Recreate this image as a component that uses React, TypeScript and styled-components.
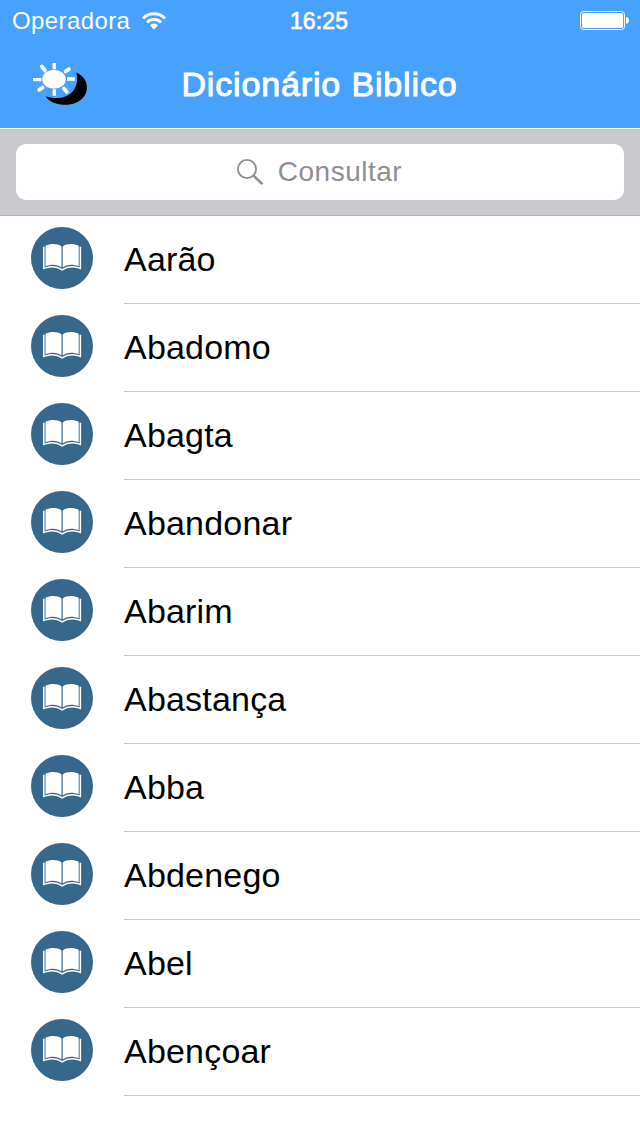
import React from "react";
import styled, { createGlobalStyle } from "styled-components";

const GlobalStyle = createGlobalStyle`
  * { box-sizing: border-box; }
  body {
    margin: 0;
    background: #fff;
    font-family: "Liberation Sans", Arial, sans-serif;
    overflow: hidden;
  }
`;

const Screen = styled.div`
  width: 640px;
  height: 1136px;
  overflow: hidden;
  display: flex;
  flex-direction: column;
  background: #fff;
`;

const Header = styled.header`
  height: 129px;
  flex: none;
  background: #47a1ff;
  border-bottom: 1px solid #f4f4f4;
  color: #fff;
`;

const StatusBar = styled.div`
  height: 40px;
  display: grid;
  grid-template-columns: 1fr auto 1fr;
  align-items: center;
  padding: 1px 11px 0 12px;
`;

const Carrier = styled.div`
  display: flex;
  align-items: center;
  gap: 11px;
  font-size: 24px;
  line-height: 28px;
  letter-spacing: 0.4px;
`;

const Clock = styled.div`
  padding-right: 3px;
  font-size: 23px;
  line-height: 28px;
  letter-spacing: 0.1px;
  -webkit-text-stroke: 0.7px #fff;
`;

const BatterySlot = styled.div`
  display: flex;
  justify-content: flex-end;
`;

const NavBar = styled.div`
  height: 88px;
  display: grid;
  grid-template-columns: 1fr auto 1fr;
  align-items: center;
  padding: 0 33px 0 32px;
`;

const ThemeButton = styled.button`
  width: 56px;
  height: 44px;
  padding: 0;
  border: 0;
  background: none;
  display: flex;
`;

const Title = styled.h1`
  margin: 0;
  font-size: 34px;
  line-height: 40px;
  font-weight: 400;
  letter-spacing: 0.85px;
  -webkit-text-stroke: 1px #fff;
`;

const SearchBar = styled.div`
  height: 87px;
  flex: none;
  padding: 15px 16px;
  background: #c9c9ce;
  border-bottom: 1px solid #b2b2b6;
`;

const SearchField = styled.div`
  height: 56px;
  display: flex;
  align-items: center;
  justify-content: center;
  gap: 14px;
  padding-right: 2px;
  border-radius: 10px;
  background: #fff;
  color: #8e8e93;
  font-size: 28px;
  line-height: 34px;
  letter-spacing: 0.5px;
`;

const List = styled.ul`
  margin: 0;
  padding: 0;
  list-style: none;
`;

const Row = styled.li`
  height: 88px;
  display: flex;
  padding-left: 30px;
`;

const RowIcon = styled.div`
  width: 94px;
  flex: none;
  padding-top: 10px;
`;

const RowLabel = styled.div`
  flex: 1;
  display: flex;
  align-items: center;
  padding-bottom: 2px;
  border-bottom: 1px solid #c8c7cc;
  color: #000;
  font-size: 34px;
  line-height: 40px;
  letter-spacing: 0.2px;
`;

const WifiIcon = () => (
  <svg width="26" height="20" viewBox="0 0 26 20" fill="none">
    <path d="M2 7.4 A15.5 15.5 0 0 1 24 7.4" stroke="#fff" strokeWidth="2.9" />
    <path d="M6 11.4 A9.9 9.9 0 0 1 20 11.4" stroke="#fff" strokeWidth="2.8" />
    <path d="M8.9 14.3 A5.8 5.8 0 0 1 17.1 14.3 L13 18.5 Z" fill="#fff" />
  </svg>
);

const BatteryIcon = () => (
  <svg width="49" height="19" viewBox="0 0 49 19">
    <rect x="0.5" y="0.5" width="44" height="18" rx="3" fill="none" stroke="#fff" />
    <rect x="2" y="2" width="41" height="15" rx="1.6" fill="#fff" />
    <path d="M46 6 C48 6.3 49 7.6 49 9.5 C49 11.4 48 12.7 46 13 Z" fill="#fff" />
  </svg>
);

const DayNightIcon = () => (
  <svg width="56" height="44" viewBox="0 0 56 44">
    <path
      d="M44.3 10.6 C51 13.7 54.9 18.5 54.9 25.5 C54.9 35.5 45.5 42.8 33.5 42.8 C24.5 42.8 17.5 39.8 13.5 34.2 C19 36 25 36.4 30.5 35.4 C41.5 33.2 47.5 22.5 44.3 10.6 Z"
      fill="#000"
    />
    <ellipse cx="22" cy="17.2" rx="11.8" ry="9.5" fill="#fff" />
    <g stroke="#fff" strokeWidth="3.4">
      <path d="M22.3 1 V7.2 M22.3 27.2 V33.8 M1 17.6 H9.4 M35 17 H43" />
      <path d="M9.8 4.6 L12.8 8.4 M33.6 9.4 L37 7.2 M7.3 27.8 L10.5 25.6 M31.9 26.5 L34.8 29.9" strokeWidth="3.8" strokeLinecap="round" />
    </g>
  </svg>
);

const SearchIcon = () => (
  <svg width="28" height="28" viewBox="0 0 28 28" fill="none" stroke="#8e8e93">
    <circle cx="11" cy="11" r="9.1" strokeWidth="1.9" />
    <path d="M17.6 17.6 L25.6 25.4" strokeWidth="2.7" strokeLinecap="round" />
  </svg>
);

const BookIcon = () => (
  <svg width="64" height="64" viewBox="0 0 64 64">
    <circle cx="32" cy="32" r="31" fill="#38678c" />
    <path
      d="M15.5 19.8 C20 17.6 27.5 17.2 31.5 20.6 V41.4 C27.5 38.2 21 38 15.5 40.3 Z M32.7 20.6 C36.7 17.2 44 17.6 48.7 19.8 V40.3 C43.2 38 36.7 38.2 32.7 41.4 Z"
      fill="#fff"
    />
    <path
      d="M13.8 20.8 V42.4 C20.5 40 27 40.4 32.1 43.9 C37.2 40.4 43.7 40 50.4 42.4 V20.8"
      fill="none"
      stroke="#fff"
      strokeWidth="1.5"
    />
  </svg>
);

const entries = [
  "Aarão",
  "Abadomo",
  "Abagta",
  "Abandonar",
  "Abarim",
  "Abastança",
  "Abba",
  "Abdenego",
  "Abel",
  "Abençoar",
];

export default function App() {
  return (
    <Screen>
      <GlobalStyle />
      <Header>
        <StatusBar>
          <Carrier>
            Operadora
            <WifiIcon />
          </Carrier>
          <Clock>16:25</Clock>
          <BatterySlot>
            <BatteryIcon />
          </BatterySlot>
        </StatusBar>
        <NavBar>
          <ThemeButton aria-label="Tema">
            <DayNightIcon />
          </ThemeButton>
          <Title>Dicionário Biblico</Title>
        </NavBar>
      </Header>
      <SearchBar>
        <SearchField>
          <SearchIcon />
          <span>Consultar</span>
        </SearchField>
      </SearchBar>
      <List>
        {entries.map((entry) => (
          <Row key={entry}>
            <RowIcon>
              <BookIcon />
            </RowIcon>
            <RowLabel>{entry}</RowLabel>
          </Row>
        ))}
      </List>
    </Screen>
  );
}
